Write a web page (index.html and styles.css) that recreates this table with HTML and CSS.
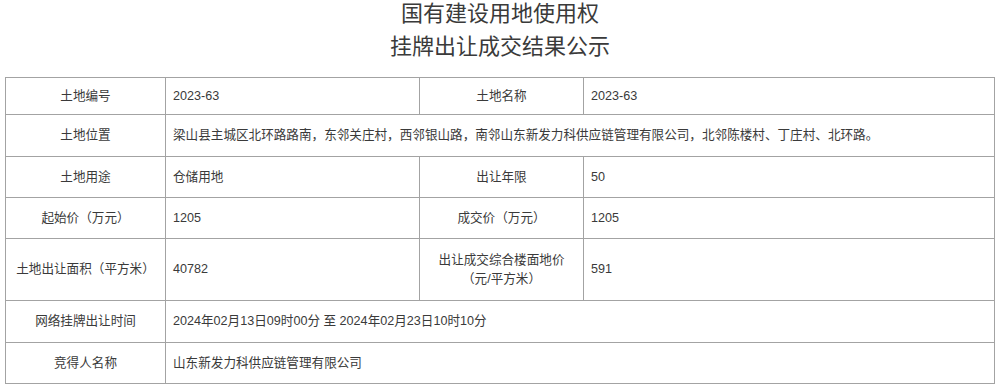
FILE: index.html
```html
<!DOCTYPE html>
<html lang="zh-CN">
<head>
<meta charset="utf-8">
<title>国有建设用地使用权挂牌出让成交结果公示</title>
<link rel="stylesheet" href="styles.css">
</head>
<body>
<div class="page">
  <h1 class="title">国有建设用地使用权<br>挂牌出让成交结果公示</h1>
  <table class="info">
    <colgroup>
      <col class="c1"><col class="c2"><col class="c3"><col class="c4">
    </colgroup>
    <tr class="r1">
      <th>土地编号</th><td>2023-63</td>
      <th>土地名称</th><td>2023-63</td>
    </tr>
    <tr class="r2">
      <th>土地位置</th>
      <td colspan="3">梁山县主城区北环路路南，东邻关庄村，西邻银山路，南邻山东新发力科供应链管理有限公司，北邻陈楼村、丁庄村、北环路。</td>
    </tr>
    <tr class="r3">
      <th>土地用途</th><td>仓储用地</td>
      <th>出让年限</th><td>50</td>
    </tr>
    <tr class="r4">
      <th>起始价（万元）</th><td>1205</td>
      <th>成交价（万元）</th><td>1205</td>
    </tr>
    <tr class="r5">
      <th>土地出让面积（平方米）</th><td>40782</td>
      <th>出让成交综合楼面地价<br>（元/平方米）</th><td>591</td>
    </tr>
    <tr class="r6">
      <th>网络挂牌出让时间</th>
      <td colspan="3">2024年02月13日09时00分 至 2024年02月23日10时10分</td>
    </tr>
    <tr class="r7">
      <th>竞得人名称</th>
      <td colspan="3">山东新发力科供应链管理有限公司</td>
    </tr>
  </table>
</div>
</body>
</html>
```

FILE: styles.css
```css
html, body {
  margin: 0;
  padding: 0;
  background: #ffffff;
}

.page {
  font-family: "Liberation Sans", "Noto Sans CJK SC", sans-serif;
  color: #3a3a3a;
}

.title {
  margin: -3px 0 0;
  font-size: 22px;
  font-weight: normal;
  line-height: 33px;
  text-align: center;
  color: #3a3a3a;
}

.info {
  margin: 14px 0 0 5px;
  width: 990px;
  border-collapse: collapse;
  table-layout: fixed;
  font-size: 12.6px;
}

.c1 { width: 160px; }
.c2 { width: 254px; }
.c3 { width: 164px; }
.c4 { width: 411px; }

.info th,
.info td {
  border: 1px solid #a3a3a3;
  padding: 0 0 0 7px;
  vertical-align: middle;
  line-height: 18.5px;
}

.info th {
  font-weight: normal;
  text-align: center;
  padding: 0;
}

.info td {
  text-align: left;
}

.r1 { height: 37px; }
.r2 { height: 42px; }
.r3 { height: 41px; }
.r4 { height: 41px; }
.r5 { height: 62px; }
.r6 { height: 42px; }
.r7 { height: 41px; }
```
